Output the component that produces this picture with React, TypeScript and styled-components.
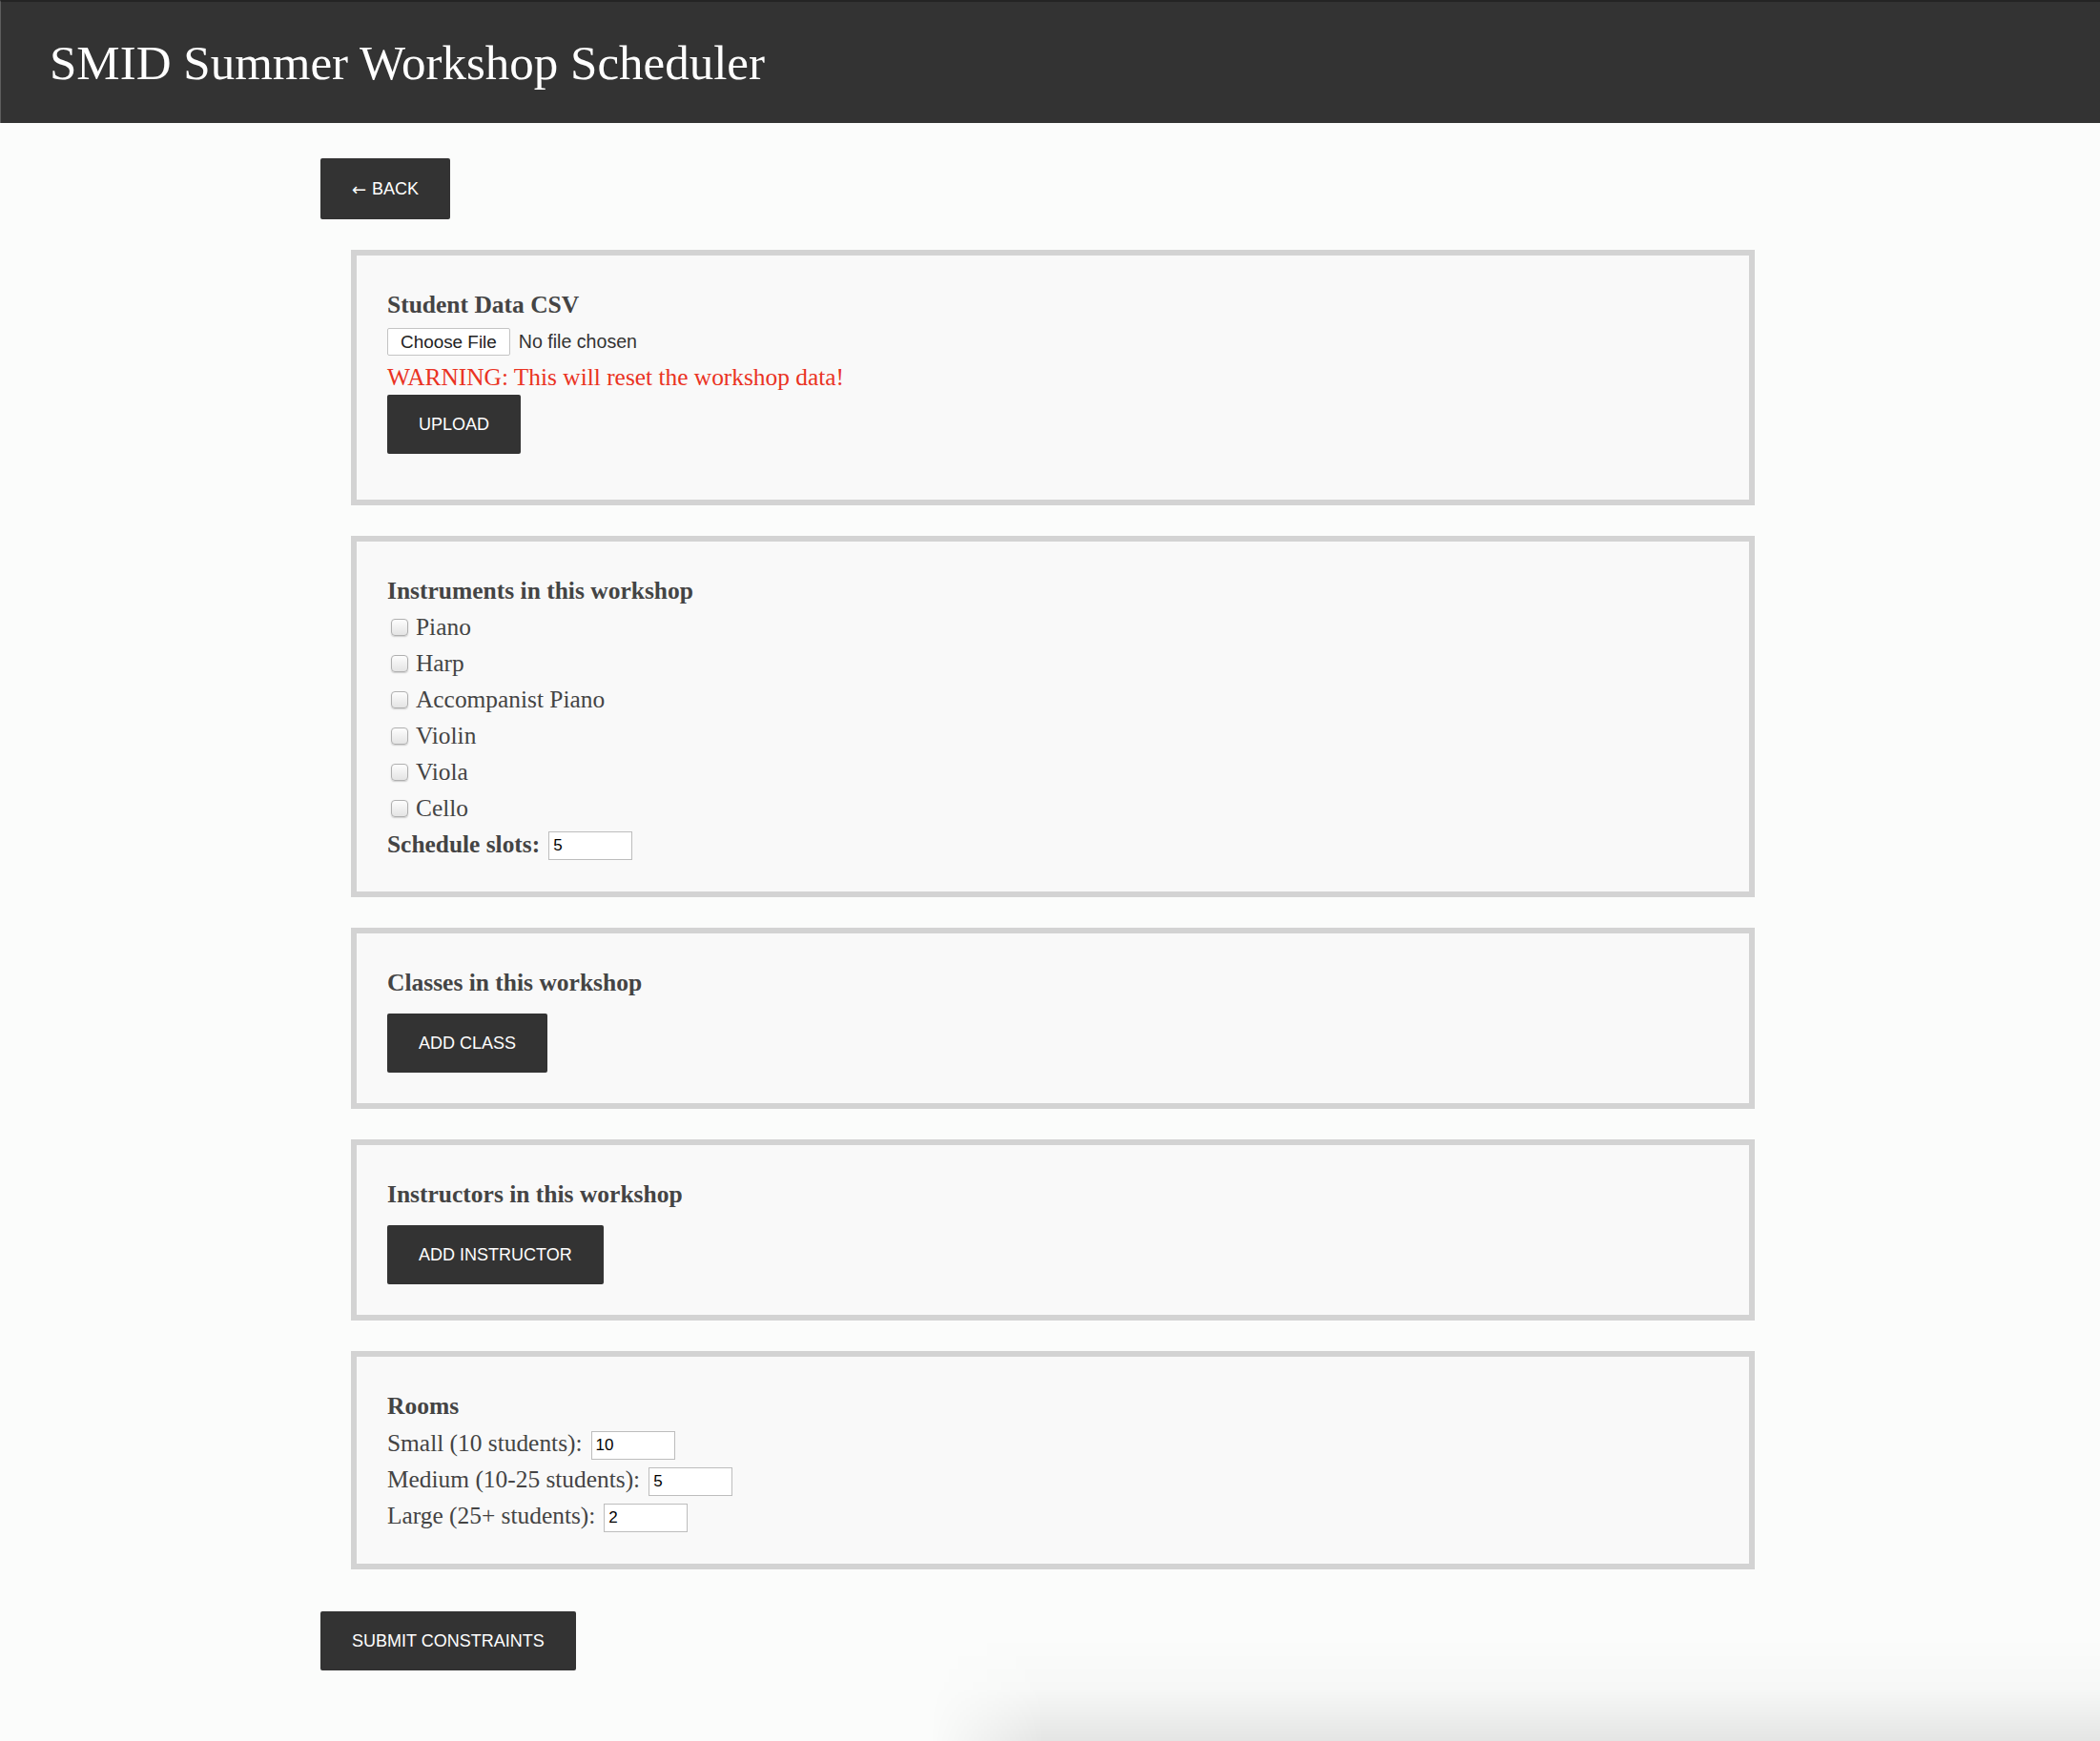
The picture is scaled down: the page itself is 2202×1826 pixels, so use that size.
import React from "react";
import styled, { createGlobalStyle } from "styled-components";

const GlobalStyle = createGlobalStyle`
	html, body {
		margin: 0;
		padding: 0;
		min-height: 100%;
		background: #fbfcfb;
	}
	body {
		font-family: "Liberation Serif", "Times New Roman", serif;
		color: #444;
	}
	* {
		box-sizing: border-box;
	}
`;

const Header = styled.header`
	display: flex;
	align-items: center;
	height: 129px;
	padding-left: 51px;
	background: #333;
	border-top: 2px solid #242424;
	border-left: 1px solid #5e5e5e;
`;

const Title = styled.h1`
	margin: 0;
	font-size: 51px;
	font-weight: normal;
	line-height: 58px;
	color: #fff;
`;

const Main = styled.main`
	display: flex;
	flex-direction: column;
	align-items: flex-start;
	width: 1536px;
	margin-left: 336px;
	padding: 37px 0 74px;
`;

const Button = styled.button<{ $tall?: boolean }>`
	display: flex;
	align-items: center;
	height: ${props => (props.$tall ? 64 : 62)}px;
	padding: 0 33px;
	border: none;
	border-radius: 2px;
	background: #333;
	color: #fff;
	font-family: "Liberation Sans", Arial, sans-serif;
	font-size: 18px;
	text-transform: uppercase;
	white-space: pre;
	cursor: pointer;
`;

const Arrow = styled.span`
	font-family: "DejaVu Sans", sans-serif;
	font-size: 18px;
	margin-right: 6px;
`;

const Card = styled.section<{ $bottom: number }>`
	align-self: stretch;
	display: flex;
	flex-direction: column;
	align-items: flex-start;
	margin: 32px 32px 0;
	padding: 37px 32px ${props => props.$bottom}px;
	background: #f9f9f9;
	border: 6px solid #d3d3d3;
`;

const Heading = styled.h3`
	margin: 0;
	font-size: 25.5px;
	font-weight: bold;
	line-height: 30px;
	color: #444;
`;

const FileRow = styled.div`
	display: flex;
	align-items: center;
	height: 29px;
	margin-top: 9px;
	font-family: "Liberation Sans", Arial, sans-serif;
`;

const FileButton = styled.span`
	display: flex;
	align-items: center;
	height: 29px;
	padding: 0 13px;
	background: #fff;
	border: 1.5px solid #c4c4c4;
	border-radius: 2px;
	font-size: 18.9px;
	color: #222;
`;

const FileName = styled.span`
	margin-left: 9px;
	font-size: 19.6px;
	color: #333;
`;

const Warning = styled.p`
	margin: 8px 0 4px;
	font-size: 25.4px;
	line-height: 29px;
	color: #ea3323;
`;

const List = styled.div<{ $top: number }>`
	display: flex;
	flex-direction: column;
	margin-top: ${props => props.$top}px;
`;

const Row = styled.label`
	display: flex;
	align-items: center;
	height: 38px;
	font-size: 25.4px;
	line-height: 38px;
	white-space: pre;
`;

const RowLabel = styled.span<{ $bold?: boolean }>`
	font-weight: ${props => (props.$bold ? "bold" : "normal")};
`;

const Check = styled.input.attrs({ type: "checkbox" })`
	appearance: none;
	flex-shrink: 0;
	width: 18px;
	height: 18px;
	margin: 1px 8px 0 4px;
	border: 1px solid #b0b0b0;
	border-radius: 4px;
	background: linear-gradient(#fdfdfd, #e4e4e4);
	box-shadow: 0 1px 1.5px rgba(0, 0, 0, 0.18);
`;

const NumberInput = styled.input<{ $drop?: number }>`
	flex-shrink: 0;
	width: 88px;
	height: 30px;
	margin: ${props => props.$drop ?? 3}px 0 0 9px;
	padding: 0 4px;
	background: #fff;
	border: 1px solid #bdbdbd;
	font-family: "Liberation Sans", Arial, sans-serif;
	font-size: 17px;
	color: #000;
	outline: none;
`;

const BottomShade = styled.div`
	position: fixed;
	left: 975px;
	right: 0;
	bottom: 0;
	height: 110px;
	pointer-events: none;
	background: linear-gradient(to bottom, rgba(0, 0, 0, 0), rgba(0, 0, 0, 0.015) 50%, rgba(0, 0, 0, 0.09));
	-webkit-mask-image: linear-gradient(to right, transparent, #000 120px);
	mask-image: linear-gradient(to right, transparent, #000 120px);
`;

const instruments = ["Piano", "Harp", "Accompanist Piano", "Violin", "Viola", "Cello"];

const rooms = [
	{ label: "Small (10 students):", value: "10" },
	{ label: "Medium (10-25 students):", value: "5" },
	{ label: "Large (25+ students):", value: "2" }
];

export default function App() {
	return (
		<>
			<GlobalStyle />
			<Header>
				<Title>SMID Summer Workshop Scheduler</Title>
			</Header>
			<Main>
				<Button $tall>
					<Arrow>←</Arrow>Back
				</Button>

				<Card $bottom={48}>
					<Heading>Student Data CSV</Heading>
					<FileRow>
						<FileButton>Choose File</FileButton>
						<FileName>No file chosen</FileName>
					</FileRow>
					<Warning>WARNING: This will reset the workshop data!</Warning>
					<Button>Upload</Button>
				</Card>

				<Card $bottom={31}>
					<Heading>Instruments in this workshop</Heading>
					<List $top={3}>
						{instruments.map(name => (
							<Row key={name}>
								<Check />
								<RowLabel>{name}</RowLabel>
							</Row>
						))}
						<Row>
							<RowLabel $bold>Schedule slots:</RowLabel>
							<NumberInput defaultValue="5" />
						</Row>
					</List>
				</Card>

				<Card $bottom={32}>
					<Heading>Classes in this workshop</Heading>
					<Button style={{ marginTop: 17 }}>Add Class</Button>
				</Card>

				<Card $bottom={32}>
					<Heading>Instructors in this workshop</Heading>
					<Button style={{ marginTop: 17 }}>Add Instructor</Button>
				</Card>

				<Card $bottom={32}>
					<Heading>Rooms</Heading>
					<List $top={4}>
						{rooms.map(room => (
							<Row key={room.label}>
								<RowLabel>{room.label}</RowLabel>
								<NumberInput $drop={6} defaultValue={room.value} />
							</Row>
						))}
					</List>
				</Card>

				<Button style={{ marginTop: 44 }}>Submit Constraints</Button>
			</Main>
			<BottomShade />
		</>
	);
}
